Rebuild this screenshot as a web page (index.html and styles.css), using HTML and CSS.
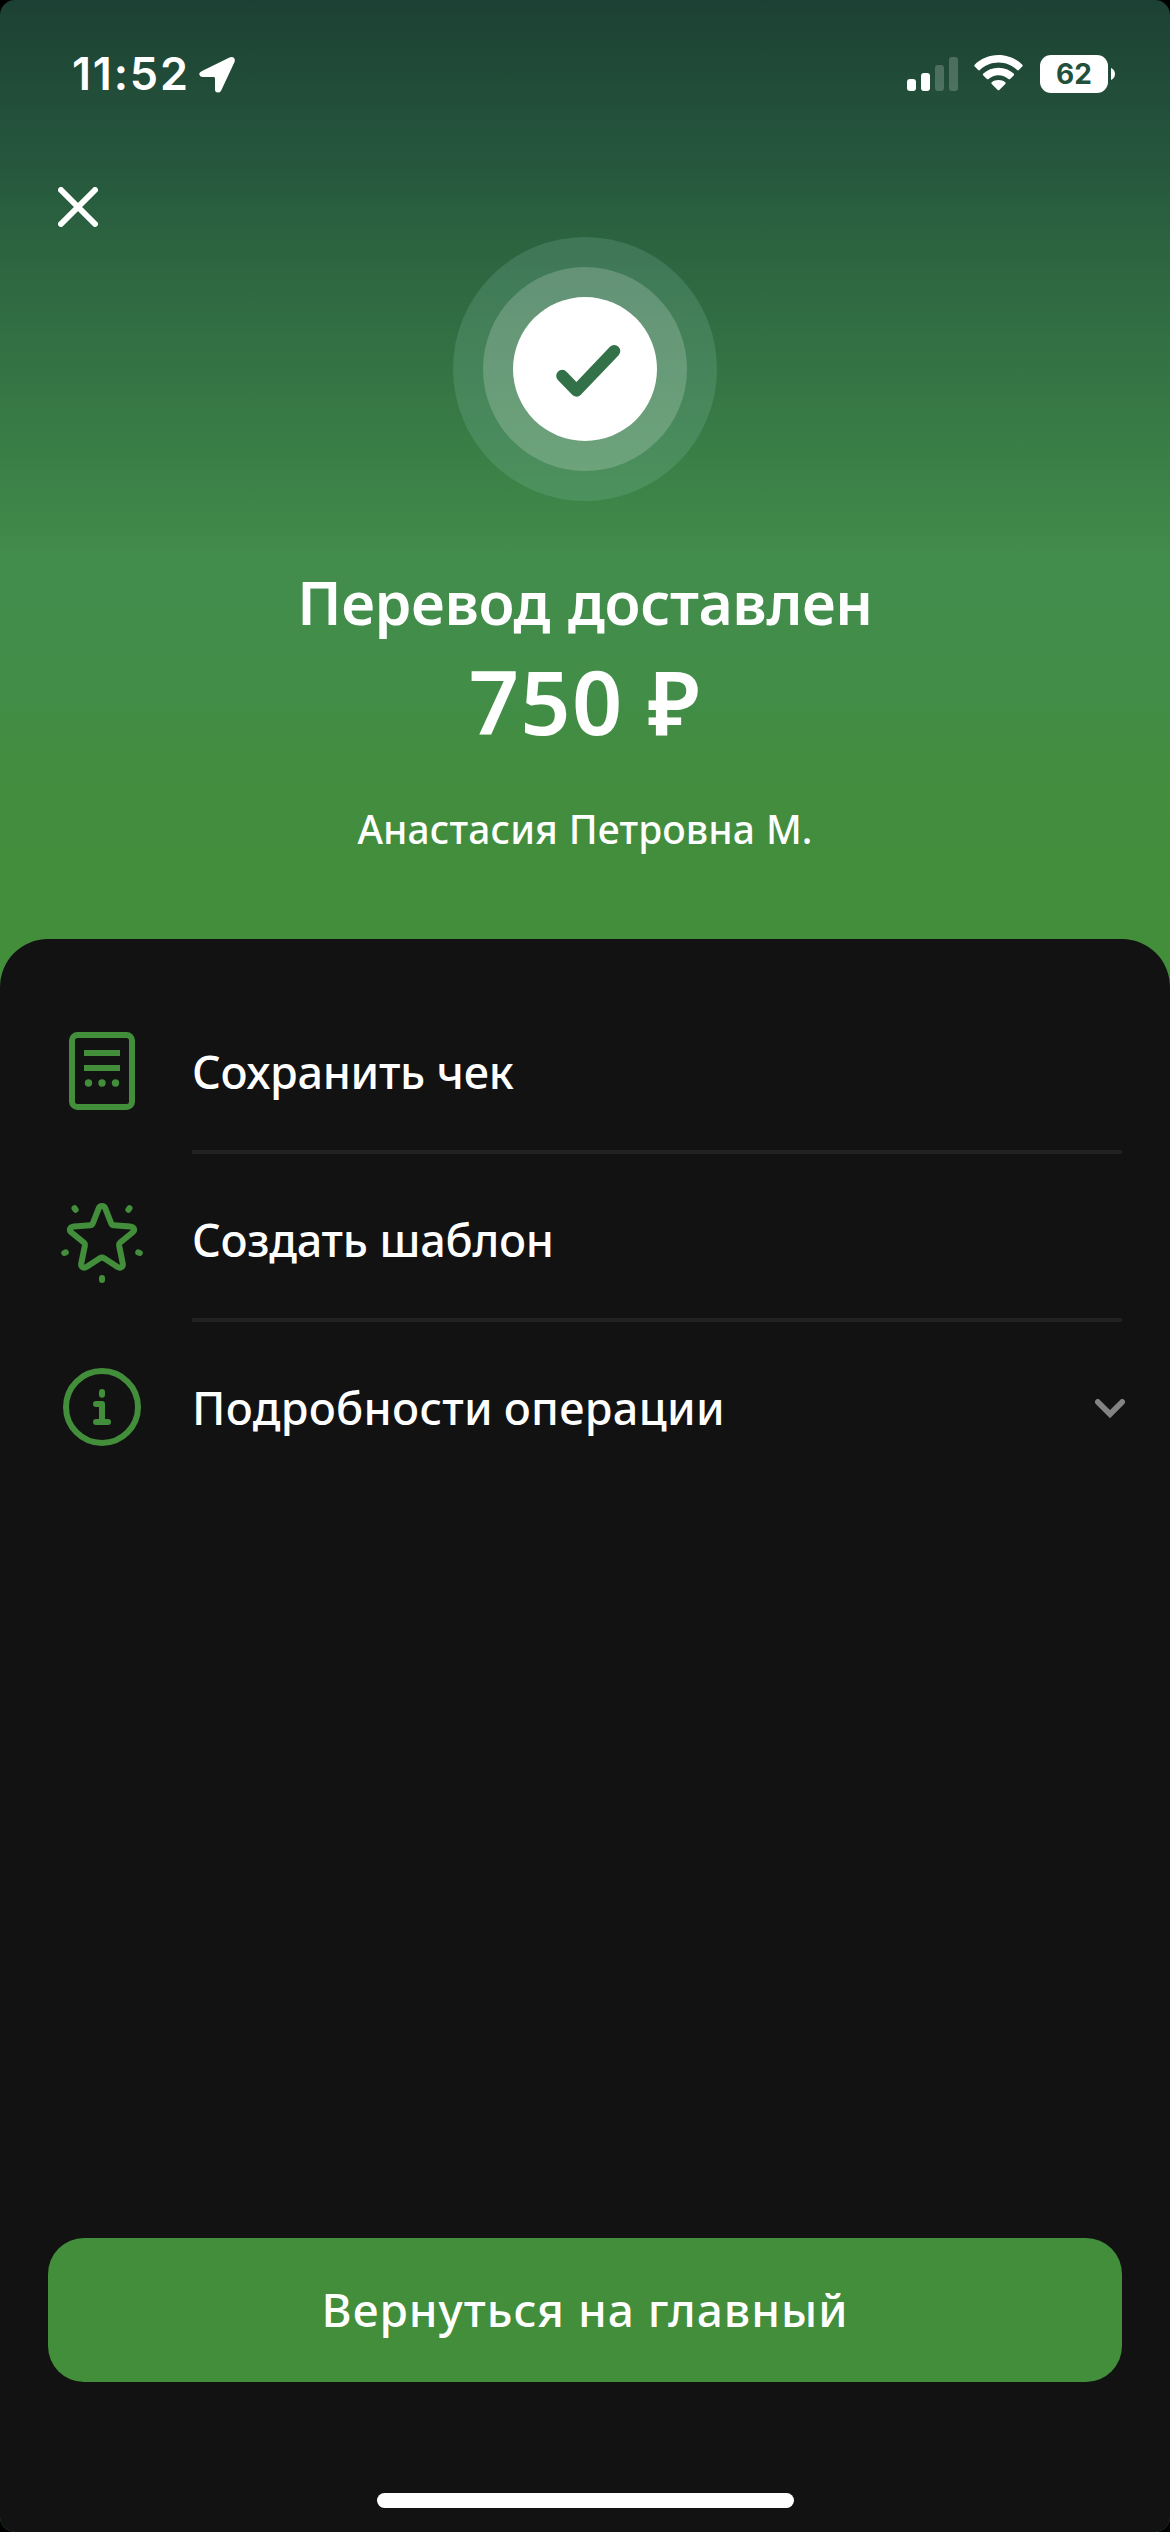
FILE: index.html
```html
<!DOCTYPE html>
<html lang="ru">
<head>
<meta charset="utf-8">
<title>Перевод доставлен</title>
<link rel="stylesheet" href="styles.css">
</head>
<body>
<main class="screen">
  <header class="hero">
    <div class="status">
      <span class="time">11:52</span>
      <svg class="location" width="36" height="36" viewBox="0 0 36 36"><path d="M3 14 30.500.6Q33.400-.6 35 1 36.400 2.600 35.400 5.200L22.200 33.400Q21 35.700 18.700 35.600 16 35.200 16 32.400V21.400Q16 20 14.600 20H3.500Q.6 19.800.2 17.200 0 15.400 3 14Z" fill="#fff"/></svg>
      <svg class="signal" width="51" height="34" viewBox="0 0 51 34"><g fill="#fff"><rect y="22" width="9" height="12" rx="3"/><rect x="14" y="16" width="9" height="18" rx="3"/><g opacity=".2"><rect x="28" y="8" width="9" height="26" rx="3"/><rect x="42" width="9" height="34" rx="3"/></g></g></svg>
      <svg class="wifi" width="49" height="36" viewBox="0 0 49 36"><g fill="#fff"><path d="M24.500 0C34 0 42.500 3.900 48.300 9.700Q49.200 10.600 48.300 11.500L44.800 15Q44 15.800 43.100 15C38 10.300 31.500 7.600 24.500 7.600S11 10.300 5.900 15Q5 15.800 4.200 15L.7 11.500Q-.2 10.600.7 9.700C6.500 3.900 15 0 24.500 0Z"/><path d="M24.500 12.800C30.500 12.800 35.800 15 39.700 18.600Q40.600 19.500 39.700 20.400L36.100 23.900Q35.300 24.700 34.400 23.900C31.700 21.600 28.300 20.200 24.500 20.200S17.300 21.600 14.600 23.900Q13.700 24.700 12.900 23.900L9.300 20.400Q8.400 19.500 9.300 18.600C13.200 15 18.500 12.800 24.500 12.800Z"/><path d="M24.500 25C27.200 25 29.500 25.800 31.300 27.200Q32.200 28 31.300 28.900L25.300 34.900Q24.500 35.700 23.700 34.900L17.700 28.900Q16.800 28 17.700 27.200C19.500 25.800 21.800 25 24.500 25Z"/></g></svg>
      <span class="battery">62</span>
      <svg class="nub" width="4" height="12" viewBox="0 0 4 12"><path d="M0 0C2.400.9 4 3.200 4 6S2.400 11.100 0 12Z" fill="#fff"/></svg>
    </div>
    <svg class="close" width="40" height="40" viewBox="0 0 40 40"><path d="M3 3 37 37M37 3 3 37" stroke="#fff" stroke-width="6" stroke-linecap="round"/></svg>
    <svg class="badge" width="264" height="264" viewBox="0 0 264 264"><circle cx="132" cy="132" r="132" fill="#8cc8b4" fill-opacity=".2"/><circle cx="132" cy="132" r="102" fill="#fff" fill-opacity=".19"/><circle cx="132" cy="132" r="72" fill="#fff"/><path d="M109.200 138.800 123.500 153.700 161.300 114" fill="none" stroke="#337248" stroke-width="12" stroke-linecap="round" stroke-linejoin="round"/></svg>
    <h1 class="title">Перевод доставлен</h1>
    <p class="amount">750 ₽</p>
    <p class="name">Анастасия Петровна М.</p>
  </header>
  <section class="sheet">
    <ul class="actions">
      <li class="row">
        <svg class="icon" width="96" height="96" viewBox="0 0 96 96"><rect x="18" y="12" width="60" height="72" rx="5.500"/><path d="M30 30H66M30 45H66"/><g class="dots"><circle cx="34.500" cy="60" r="3.700"/><circle cx="48" cy="60" r="3.700"/><circle cx="61.500" cy="60" r="3.700"/></g></svg>
        <div class="label">Сохранить чек</div>
      </li>
      <li class="row">
        <svg class="icon" width="96" height="96" viewBox="0 0 96 96"><path d="M44.800 17.200C46 14.300 50 14.300 51.200 17.200L57.200 32.300C57.700 33.500 58.600 34.200 59.900 34.300L76 35.400C80.200 35.700 81.500 39 78.500 41.500L66.200 51.500C65.300 52.300 64.900 53.300 65.100 54.500L68.800 72.600C69.400 75.900 66.200 77.600 63.600 76L50.200 67.300Q48 66 45.800 67.300L32.400 76C29.800 77.600 26.600 75.900 27.200 72.600L30.900 54.500C31.100 53.300 30.700 52.300 29.800 51.500L17.500 41.500C14.500 39 15.800 35.700 20 35.400L36.100 34.300C37.400 34.200 38.300 33.500 38.800 32.300Z"/><path class="sparks" d="M20.500 17.200 21.600 18.800M75.500 17.200 74.400 18.800M10.200 62 11.800 61.400M85.800 62 84.200 61.400M48 87V89"/></svg>
        <div class="label">Создать шаблон</div>
      </li>
      <li class="row">
        <svg class="icon" width="96" height="96" viewBox="0 0 96 96"><circle cx="48" cy="48" r="36"/><path class="sparks" d="M48 33V35.800M42 45H48V63M42 63H54"/></svg>
        <div class="label label-long">Подробности операции</div>
        <svg class="chevron" width="30" height="20" viewBox="0 0 30 20"><path d="M2.800 2.900 15 15.100 27.200 2.900" fill="none" stroke="#838383" stroke-width="5.700" stroke-linecap="round"/></svg>
      </li>
    </ul>
    <button class="back">Вернуться на главный</button>
    <div class="home"></div>
  </section>
</main>
</body>
</html>
```
FILE: styles.css
```css
* { box-sizing: border-box; margin: 0; padding: 0; }
body { width: 1170px; background: #000; color: #fff; font-family: "Noto Sans", sans-serif; }
.screen {
  display: flex;
  flex-direction: column;
  height: 2532px;
  border-radius: 15px;
  overflow: hidden;
  background: linear-gradient(#1c4134 0, #26573d 165px, #2a603f 220px, #3f8749 520px, #428d4c 570px, #428d47 700px, #428d3f 760px, #428e3b 939px);
}
.hero { display: flex; flex-direction: column; align-items: center; height: 939px; padding-top: 55px; }
.status { display: flex; align-items: center; align-self: stretch; height: 38px; padding: 0 55px 0 71px; }
.time { width: 128px; padding-left: 1px; font: 600 45px/38px Inter, sans-serif; letter-spacing: 1.8px; }
.location { margin-top: 2px; }
.signal { margin-left: auto; }
.wifi { margin: 0 17px 2px 16px; }
.battery { width: 68px; height: 38px; border-radius: 11px; background: #fff; color: #22503b; font: 700 28px/38px Inter, sans-serif; text-align: center; }
.nub { margin-left: 3px; }
.close { align-self: flex-start; margin: 94px 0 0 58px; }
.badge { margin-top: 10px; }
.title { margin-top: 61px; font-size: 59px; font-weight: 580; line-height: 80px; letter-spacing: -.4px; word-spacing: 3px; }
.amount { margin-top: 9px; font-size: 88px; font-weight: 600; line-height: 100px; letter-spacing: 1.3px; }
.name { margin-top: 52px; font-size: 39px; font-weight: 460; line-height: 52px; letter-spacing: .1px; word-spacing: .6px; }
.sheet { display: flex; flex-direction: column; flex: 1; padding: 47px 48px 24px; border-radius: 48px 48px 0 0; background: #121212; }
.actions { list-style: none; }
.row { display: flex; align-items: center; height: 168px; }
.icon { flex: none; margin: 2px 42px 0 6px; fill: none; stroke: #428e3b; stroke-width: 6; }
.dots { fill: #428e3b; stroke: none; }
.sparks { stroke-linecap: round; stroke-linejoin: round; }
.label { display: flex; align-items: center; flex: 1; height: 168px; padding-top: 7px; font-size: 45px; font-weight: 490; letter-spacing: -.3px; word-spacing: .5px; border-bottom: 4px solid #212121; }
.row:last-child .label { border-bottom-color: transparent; }
.label-long { letter-spacing: .3px; word-spacing: -1.4px; }
.chevron { margin: 6px -3px 0 0; }
.back { height: 144px; margin-top: auto; padding-bottom: 2px; border: 0; border-radius: 36px; background: #428e3b; color: #fff; font: 480 46px/142px "Noto Sans", sans-serif; letter-spacing: 1px; }
.home { align-self: center; width: 417px; height: 15px; margin-top: 111px; border-radius: 8px; background: #fff; }
```
